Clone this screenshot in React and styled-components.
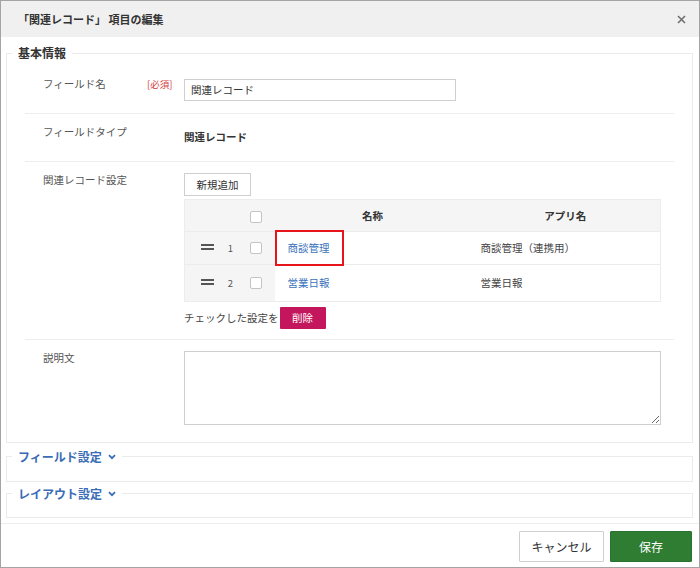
import React from 'react';
import styled, { createGlobalStyle } from 'styled-components';

const GlobalStyle = createGlobalStyle`
  html, body {
    margin: 0;
    padding: 0;
    background: #fff;
  }
  body {
    font-family: 'Noto Sans CJK JP', 'Noto Sans', sans-serif;
    color: #333;
  }
  * {
    box-sizing: border-box;
  }
`;

const records = [
  { no: 1, name: '商談管理', app: '商談管理（連携用）', marked: true },
  { no: 2, name: '営業日報', app: '営業日報', marked: false },
];

const CloseIcon = () => (
  <svg width='9' height='9' viewBox='0 0 9 9'>
    <path d='M1 1 L8 8 M8 1 L1 8' stroke='#6f6f6f' strokeWidth='1.6' fill='none' />
  </svg>
);

const Chevron = () => (
  <svg width='8' height='6' viewBox='0 0 8 6'>
    <path d='M1 1.2 L4 4.2 L7 1.2' stroke='#3a6db5' strokeWidth='1.8' fill='none' />
  </svg>
);

const DragHandle = () => (
  <svg width='13' height='7' viewBox='0 0 13 7'>
    <rect x='0' y='0' width='13' height='2' fill='#555' />
    <rect x='0' y='4' width='13' height='2' fill='#555' />
  </svg>
);

const App = () => {
  return (
    <>
      <GlobalStyle />
      <Dialog>
        <Header>
          <Title>「関連レコード」 項目の編集</Title>
          <CloseButton>
            <CloseIcon />
          </CloseButton>
        </Header>

        <Body>
          <Section>
            <Legend>基本情報</Legend>

            <Row>
              <Label>フィールド名</Label>
              <Required>[必須]</Required>
              <Content>
                <TextInput defaultValue='関連レコード' />
              </Content>
            </Row>

            <Row>
              <Label>フィールドタイプ</Label>
              <Required />
              <Content>
                <Value>関連レコード</Value>
              </Content>
            </Row>

            <Row $snug>
              <Label>関連レコード設定</Label>
              <Required />
              <Content>
                <AddButton>新規追加</AddButton>
                <Table>
                  <thead>
                    <tr>
                      <HeadCell $side style={{ width: 36 }} />
                      <HeadCell $side style={{ width: 20 }} />
                      <HeadCell $side $check style={{ width: 34 }}>
                        <Checkbox />
                      </HeadCell>
                      <HeadCell style={{ width: 196 }}>名称</HeadCell>
                      <HeadCell>アプリ名</HeadCell>
                    </tr>
                  </thead>
                  <tbody>
                    {records.map((r, i) => (
                      <tr key={r.no}>
                        <SideCell $align='right' $tall={i === 1}>
                          <DragHandle />
                        </SideCell>
                        <SideCell $tall={i === 1}>
                          <RowNo>{r.no}</RowNo>
                        </SideCell>
                        <SideCell $align='left' $tall={i === 1}>
                          <Checkbox />
                        </SideCell>
                        <NameCell>
                          {r.marked && <Highlight />}
                          <RecordLink>{r.name}</RecordLink>
                        </NameCell>
                        <Cell>{r.app}</Cell>
                      </tr>
                    ))}
                  </tbody>
                </Table>
                <Actions>
                  <span>チェックした設定を</span>
                  <DeleteButton>削除</DeleteButton>
                </Actions>
              </Content>
            </Row>

            <Row $last>
              <Label>説明文</Label>
              <Required />
              <Content>
                <TextArea />
              </Content>
            </Row>
          </Section>

          <Section $collapsed>
            <Legend $link>
              フィールド設定 <Chevron />
            </Legend>
          </Section>

          <Section $collapsed $tight>
            <Legend $link>
              レイアウト設定 <Chevron />
            </Legend>
          </Section>
        </Body>

        <Footer>
          <CancelButton>キャンセル</CancelButton>
          <SaveButton>保存</SaveButton>
        </Footer>
      </Dialog>
    </>
  );
};

const Dialog = styled.div`
  width: 700px;
  height: 568px;
  border: 1px solid #a4a4a4;
  display: flex;
  flex-direction: column;
  background: #fff;
  overflow: hidden;
`;

const Header = styled.div`
  height: 36px;
  background: #f0f0f0;
  display: flex;
  align-items: center;
  justify-content: space-between;
  padding: 0 11px 0 17px;
`;

const Title = styled.h1`
  margin: 0;
  font-size: 11px;
  font-weight: 700;
  color: #333;
`;

const CloseButton = styled.span`
  display: flex;
  width: 14px;
  height: 14px;
  align-items: center;
  justify-content: center;
`;

const Body = styled.div`
  flex: 1;
  padding: 8px 6px 0 5px;
  overflow: hidden;
`;

const Section = styled.fieldset`
  margin: ${(p) => (p.$collapsed ? (p.$tight ? '4px' : '6px') : '0')} 0 0;
  border: 1px solid #ebebeb;
  padding: ${(p) =>
    p.$collapsed ? (p.$tight ? '0 0 15px' : '0 0 16px') : '5px 0 5px'};
  min-width: 0;
`;

const Legend = styled.legend`
  margin-left: 5px;
  padding: 0 6px;
  font-size: 12px;
  line-height: 16px;
  font-weight: 700;
  color: ${(p) => (p.$link ? '#3a6db5' : '#333')};
  display: flex;
  align-items: center;
  gap: 6px;
`;

const Row = styled.div`
  display: flex;
  align-items: flex-start;
  margin: 0 18px;
  padding: 9px 11px ${(p) => (p.$snug ? '10px' : '12px')} 18px;
  border-bottom: ${(p) => (p.$last ? 'none' : '1px solid #ededed')};
`;

const Label = styled.div`
  width: 104px;
  flex-shrink: 0;
  font-size: 10.5px;
  line-height: 18px;
  color: #555;
`;

const Required = styled.div`
  width: 37px;
  flex-shrink: 0;
  font-size: 9.5px;
  line-height: 18px;
  color: #d33c3c;
`;

const Content = styled.div`
  flex: 1;
  min-width: 0;
`;

const TextInput = styled.input`
  width: 272px;
  height: 22px;
  border: 1px solid #cfcfcf;
  padding: 0 6px;
  font-family: inherit;
  font-size: 10.5px;
  color: #333;
  outline: none;
`;

const Value = styled.div`
  padding: 5px 0 3px;
  font-size: 10.5px;
  line-height: 18px;
  font-weight: 700;
  color: #333;
`;

const AddButton = styled.button`
  display: block;
  margin-top: 2px;
  height: 23px;
  width: 67px;
  border: 1px solid #cfcfcf;
  background: #fff;
  font-family: inherit;
  font-size: 10.5px;
  color: #333;
  padding: 0;
`;

const Table = styled.table`
  margin-top: 3px;
  width: 477px;
  border-collapse: collapse;
  border: 1px solid #ececec;
  font-size: 10.5px;
`;

const HeadCell = styled.th`
  height: 32px;
  padding: ${(p) => (p.$check ? '0 0 0 9px' : '0')};
  background: #f5f5f5;
  font-weight: 700;
  color: #333;
  text-align: ${(p) => (p.$check ? 'left' : 'center')};
  border-bottom: 1px solid #ececec;
`;

const SideCell = styled.td`
  height: ${(p) => (p.$tall ? '37px' : '33px')};
  padding: ${(p) => (p.$align === 'left' ? '0 0 0 9px' : '0')};
  background: #f5f5f5;
  text-align: ${(p) => p.$align || 'center'};
  border-bottom: 1px solid #ececec;
  vertical-align: middle;
  line-height: 0;
  svg {
    margin-right: 7px;
  }
`;

const RowNo = styled.span`
  font-size: 9.5px;
  line-height: 12px;
  color: #555;
`;

const Checkbox = styled.span`
  display: inline-block;
  width: 12px;
  height: 12px;
  border: 1px solid #c4c4c4;
  border-radius: 2px;
  background: #fff;
  vertical-align: middle;
`;

const Cell = styled.td`
  padding: 0 10px;
  color: #444;
  border-bottom: 1px solid #ececec;
`;

const NameCell = styled(Cell)`
  position: relative;
  padding: 0 13px;
`;

const Highlight = styled.span`
  position: absolute;
  left: 0;
  top: -2px;
  width: 69px;
  height: 36px;
  border: 2px solid #e8141c;
`;

const RecordLink = styled.a`
  color: #3a72bc;
  text-decoration: none;
`;

const Actions = styled.div`
  margin-top: 5px;
  display: flex;
  align-items: center;
  font-size: 10.5px;
  color: #444;
`;

const DeleteButton = styled.button`
  margin-left: 1px;
  width: 46px;
  height: 22px;
  border: none;
  border-radius: 1px;
  background: #c4165d;
  color: #fff;
  font-family: inherit;
  font-size: 10.5px;
  padding: 0;
`;

const TextArea = styled.textarea`
  display: block;
  margin-top: 2px;
  width: 477px;
  height: 74px;
  border: 1px solid #cfcfcf;
  font-family: inherit;
  font-size: 10.5px;
  outline: none;
`;

const Footer = styled.div`
  height: 44px;
  border-top: 1px solid #ededed;
  display: flex;
  justify-content: flex-end;
  align-items: flex-start;
  gap: 6px;
  padding: 7px 7px 0 0;
`;

const FooterButton = styled.button`
  height: 31px;
  font-family: inherit;
  font-size: 12px;
  padding: 0;
  border-radius: 1px;
`;

const CancelButton = styled(FooterButton)`
  width: 85px;
  background: #fff;
  border: 1px solid #cfcfcf;
  color: #333;
`;

const SaveButton = styled(FooterButton)`
  width: 82px;
  background: #2e7d32;
  border: 1px solid #2a7230;
  color: #fff;
`;

export default App;
